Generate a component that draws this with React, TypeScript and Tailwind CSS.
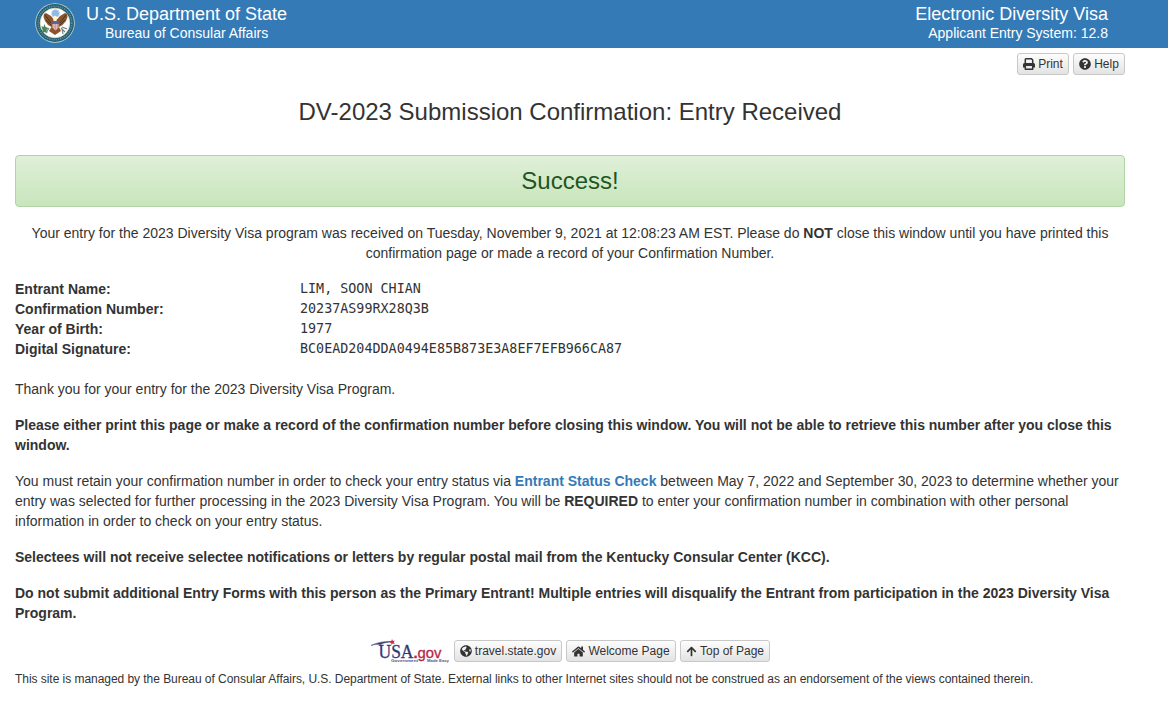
import type { ReactNode } from "react";
import { FaArrowUp, FaGlobeAmericas, FaHome, FaQuestionCircle } from "react-icons/fa";

function Button({ icon, children, className }: { icon: ReactNode; children: ReactNode; className: string }) {
  return (
    <button
      className={`flex h-[22px] items-center justify-center gap-[3px] whitespace-nowrap rounded-[3px] border border-[#c8c8c8] bg-gradient-to-b from-[#fdfdfd] to-[#e3e3e3] text-[12px] leading-[18px] text-[#333] ${className}`}
    >
      {icon}
      <span>{children}</span>
    </button>
  );
}

function PrintIcon() {
  return (
    <svg viewBox="0 0 12 12" className="h-3 w-3">
      <path d="M2.300 5.500V1.500Q2.300.8 3 .8h5.500l1.200 1.200v3.500" fill="none" stroke="currentColor" strokeWidth="1.500" />
      <path d="M1.500 5h9Q12 5 12 6.500V9.500h-2V8H2v1.500H0V6.500Q0 5 1.500 5Z" fill="currentColor" />
      <path d="M2.300 8v3.200h7.400V8" fill="none" stroke="currentColor" strokeWidth="1.500" strokeLinejoin="round" />
    </svg>
  );
}

function Seal() {
  return (
    <svg viewBox="0 0 40 40" className="h-10 w-10 shrink-0">
      <circle cx="20" cy="20" r="19.8" fill="#c9d6bd" />
      <circle cx="20" cy="20" r="19" fill="#1f5f7d" />
      <circle cx="20" cy="20" r="16.8" fill="none" stroke="#5d8f95" strokeWidth="1.6" strokeDasharray="1.2 1" />
      <circle cx="20" cy="20" r="14.8" fill="#fff" stroke="#e2dfb8" strokeWidth=".8" />
      <circle cx="20.5" cy="10.5" r="4" fill="#8dbbe6" stroke="#cfdceb" strokeWidth=".8" />
      <path d="M18.5 16 16 13 11 10 9 11 8.5 14 10 18 13 22 16.5 24 14 28 20 32 26 28 24 24 27.5 22 31 18 32.5 14 32 11 30 10 25 13 22.5 16Z" fill="#8a542c" />
      <path d="m10 12 6 8m-5-3 5 5m15-10-6 8m5-3-5 5" stroke="#4c3020" strokeWidth=".9" />
      <path d="m18 14 2-1.5 2.5 1.5-1 4h-3Z" fill="#fff2d0" />
      <path d="M17.5 18.5h6V21h-6Z" fill="#4a6aa8" />
      <path d="M17.5 21h6v3.5l-3 3-3-3Z" fill="#f1c9cc" />
      <path d="M19 21v4.5m1.7-4.5v6m1.7-6v4" stroke="#c96b78" strokeWidth=".7" />
      <path d="m6.5 23 2 1 1-3 1 3 3 1-2 2 1 3-3-1-2 1v-3Z" fill="#47865b" />
      <path d="m14 25-3 5m15-5 4 4m-3-5 5 2m-5 0 1 5" stroke="#77847b" strokeWidth="1.2" />
    </svg>
  );
}

function UsaGov() {
  return (
    <svg viewBox="0 0 80 24" className="h-6 w-20 shrink-0">
      <path d="M1 6.5C8 3 16 2 24 2.5 16 3.5 12 4 11 5.5 7 5 4 5.5 1 6.5Z" fill="#36386f" stroke="#36386f" strokeWidth=".5" />
      <path d="m22 0 .9 2 2.3-.4-1.6 1.5 1.3 1.8-2.2-.5-1.3 1.7-.1-2.2-2-.7 2-.9Z" fill="#c5284b" />
      <text x="8.5" y="18.8" fontFamily="Liberation Serif, serif" fontSize="19" textLength="35" lengthAdjust="spacingAndGlyphs" fill="#303777" stroke="#303777" strokeWidth=".3">USA</text>
      <text x="43.5" y="18.8" fontFamily="Liberation Sans, sans-serif" fontSize="15" textLength="28" lengthAdjust="spacingAndGlyphs" fill="#b52748" stroke="#b52748" strokeWidth=".3"><tspan fontWeight="bold">.</tspan>gov</text>
      <text x="21" y="23" fontFamily="Liberation Sans, sans-serif" fontWeight="bold" fontSize="4" textLength="27" lengthAdjust="spacingAndGlyphs" fill="#4a5090">Government</text>
      <text x="57" y="23" fontFamily="Liberation Sans, sans-serif" fontWeight="bold" fontSize="4" textLength="22" lengthAdjust="spacingAndGlyphs" fill="#4a5090">Made Easy</text>
    </svg>
  );
}

const details = [
  ["Entrant Name:", "LIM, SOON CHIAN"],
  ["Confirmation Number:", "20237AS99RX28Q3B"],
  ["Year of Birth:", "1977"],
  ["Digital Signature:", "BC0EAD204DDA0494E85B873E3A8EF7EFB966CA87"],
];

export default function App() {
  return (
    <div className="h-[724px] overflow-hidden bg-white font-['Liberation_Sans',Arial,sans-serif] text-[14px] leading-5 text-[#333]">
      <header className="flex h-12 justify-between bg-[#337ab7] pl-[35px] pr-[60px] text-white">
        <div className="flex">
          <div className="pt-[3px]"><Seal /></div>
          <div className="ml-[11px] pt-1">
            <div className="text-[18px] leading-5">U.S. Department of State</div>
            <div className="pl-[19px] leading-[19px]">Bureau of Consular Affairs</div>
          </div>
        </div>
        <div className="pt-1 text-right">
          <div className="text-[18px] leading-5">Electronic Diversity Visa</div>
          <div className="leading-[19px]">Applicant Entry System: 12.8</div>
        </div>
      </header>
      <main className="w-[1140px] px-[15px]">
        <div className="flex justify-end gap-1 pt-[5px]">
          <Button className="w-[52px]" icon={<PrintIcon />}>Print</Button>
          <Button className="w-[52px]" icon={<FaQuestionCircle size={12} />}>Help</Button>
        </div>
        <h1 className="mt-6 text-center text-[24px] leading-[26px]">DV-2023 Submission Confirmation: Entry Received</h1>
        <div className="mt-[30px] flex h-[52px] items-center justify-center rounded border border-[#b2d3a5] bg-gradient-to-b from-[#dff0d8] to-[#c8e5bc] text-[24px] leading-[26px] text-[#205524]">Success!</div>
        <p className="mt-4 text-center">
          Your entry for the 2023 Diversity Visa program was received on Tuesday, November 9, 2021 at 12:08:23 AM EST. Please do <b>NOT</b> close this window until you have printed this<br />
          confirmation page or made a record of your Confirmation Number.
        </p>
        <dl className="mt-4">
          {details.map(([label, value]) => (
            <div className="grid h-5 grid-cols-[285px_1fr]" key={label}>
              <dt className="font-bold">{label}</dt>
              <dd className="font-['DejaVu_Sans_Mono',monospace] text-[13.39px]">{value}</dd>
            </div>
          ))}
        </dl>
        <div className="mt-5 flex flex-col gap-4 whitespace-nowrap">
          <p>Thank you for your entry for the 2023 Diversity Visa Program.</p>
          <p className="font-bold">
            Please either print this page or make a record of the confirmation number before closing this window. You will not be able to retrieve this number after you close this<br />window.
          </p>
          <p>
            You must retain your confirmation number in order to check your entry status via <a href="#status" className="font-bold text-[#337ab7]">Entrant Status Check</a> between May 7, 2022 and September 30, 2023 to determine whether your<br />
            entry was selected for further processing in the 2023 Diversity Visa Program. You will be <b>REQUIRED</b> to enter your confirmation number in combination with other personal<br />
            information in order to check on your entry status.
          </p>
          <p className="font-bold">Selectees will not receive selectee notifications or letters by regular postal mail from the Kentucky Consular Center (KCC).</p>
          <p className="font-bold">
            Do not submit additional Entry Forms with this person as the Primary Entrant! Multiple entries will disqualify the Entrant from participation in the 2023 Diversity Visa<br />Program.
          </p>
        </div>
        <footer className="mt-4">
          <div className="flex h-6 items-center justify-center gap-1">
            <UsaGov />
            <Button className="w-[108px]" icon={<FaGlobeAmericas size={12} />}>travel.state.gov</Button>
            <Button className="w-[110px]" icon={<FaHome size={13} />}>Welcome Page</Button>
            <Button className="w-[90px]" icon={<FaArrowUp size={11} />}>Top of Page</Button>
          </div>
          <p className="mt-2 whitespace-nowrap text-[12px] leading-[17px] tracking-[-0.045px]">This site is managed by the Bureau of Consular Affairs, U.S. Department of State. External links to other Internet sites should not be construed as an endorsement of the views contained therein.</p>
        </footer>
      </main>
    </div>
  );
}
